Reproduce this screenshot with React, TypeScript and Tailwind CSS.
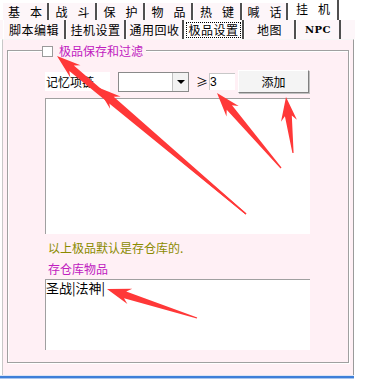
const topTabs = [
  { text: ["基", "本"], w: 47 },
  { text: ["战", "斗"], w: 48 },
  { text: ["保", "护"], w: 48 },
  { text: ["物", "品"], w: 48 },
  { text: ["热", "键"], w: 49 },
  { text: ["喊", "话"], w: 46 },
  { text: ["挂", "机"], w: 51, active: true },
];

const subTabs = [
  { text: "脚本编辑", w: 63 },
  { text: "挂机设置", w: 60 },
  { text: "通用回收", w: 58 },
  { text: "极品设置", w: 60, active: true },
  { text: "地图", w: 52 },
  { text: "NPC", w: 45 },
];

// red annotation arrows, tip -> tail
const arrows = [
  { tip: [57, 56], tail: [246, 214] },
  { tip: [97, 87], tail: [246, 214] },
  { tip: [217, 93], tail: [281, 168] },
  { tip: [286, 97], tail: [293, 153] },
  { tip: [107, 289], tail: [197, 318] },
];

const arrowPoints = (tip: number[], tail: number[]) => {
  const dx = tail[0] - tip[0];
  const dy = tail[1] - tip[1];
  const len = Math.hypot(dx, dy);
  const ux = dx / len;
  const uy = dy / len;
  const nx = -uy;
  const ny = ux;
  const L = 24;
  const W = 8;
  const p = (a: number, b: number) => `${(tip[0] + ux * a + nx * b).toFixed(1)},${(tip[1] + uy * a + ny * b).toFixed(1)}`;
  const t = (b: number) => `${(tail[0] + nx * b).toFixed(1)},${(tail[1] + ny * b).toFixed(1)}`;
  return [p(0, 0), p(L, W), p(L - 5, 3.5), t(0.6), t(-0.6), p(L - 5, -3.5), p(L, -W)].join(" ");
};

const App = () => {
  return (
    <div className="relative w-[370px] h-[384px] bg-white overflow-hidden font-['Noto_Sans_CJK_SC','DejaVu_Sans',sans-serif] text-black">
      <div className="w-[355px]">
        {/* top tab row */}
        <div className="flex h-[20px] pl-[2px] items-end">
          {topTabs.map((tab, i) => (
            <div
              key={i}
              style={{ width: tab.w }}
              className={`flex items-center justify-center gap-[10px] border-l border-l-white border-r-2 border-r-[#505050] text-[12px] leading-none ${
                tab.active ? "h-[20px] bg-white pb-[3px]" : "h-[17px] bg-[#fdf6f9] pt-[1px]"
              }`}
            >
              <span>{tab.text[0]}</span>
              <span>{tab.text[1]}</span>
            </div>
          ))}
        </div>

        {/* second tab row */}
        <div className="flex h-[19px] pl-[3px] bg-[#fdf6f9]">
          {subTabs.map((tab, i) => (
            <div
              key={i}
              style={{ width: tab.w }}
              className={`flex items-center justify-center border-l border-l-white border-r-2 border-r-[#505050] text-[12px] leading-none tracking-[0.5px] ${
                tab.active ? "bg-white" : ""
              }`}
            >
              <span
                className={`px-[1px] py-[1px] ${tab.active ? "border border-dotted border-black" : ""} ${
                  tab.text === "NPC" ? "font-['DejaVu_Serif',serif] text-[10px] font-bold" : ""
                }`}
              >
                {tab.text}
              </span>
            </div>
          ))}
        </div>

        {/* panel */}
        <div className="ml-[2px] w-[352px] h-[336px] bg-[#fff0f5] border-l border-l-[#c8c8c8] border-r border-r-[#9a9a9a] border-t border-t-[#f6f6f6] pt-[10px] pl-[4px]">
          <div className="w-[342px] h-[313px] border border-[#a0a0a0] shadow-[inset_1px_1px_0_#ffffff,1px_1px_0_#ffffff]">
            {/* legend */}
            <div className="-mt-[7px] ml-[34px] flex items-center h-[14px] w-fit bg-[#fff0f5] pr-[3px]">
              <div className="w-[11px] h-[11px] bg-white border border-[#9a9a9a]" />
              <span className="ml-[6px] text-[12px] leading-[14px] text-[#c020c0]">极品保存和过滤</span>
            </div>

            {/* controls row */}
            <div className="mt-[12px] ml-[37px] flex items-center h-[23px]">
              <div className="w-[65px] h-[19px] bg-white text-[12px] leading-[19px] pl-[1px]">记忆项链</div>
              <div className="ml-[8px] w-[71px] h-[20px] bg-white border border-[#8a8a8a] flex justify-end">
                <div className="w-[16px] h-full bg-[#f2f2f2] border-l border-[#c0c0c0] flex items-center justify-center">
                  <div className="w-0 h-0 border-l-[4px] border-r-[4px] border-t-[4px] border-l-transparent border-r-transparent border-t-black" />
                </div>
              </div>
              <span className="ml-[7px] w-[10px] text-[12px] leading-none">≥</span>
              <div className="ml-[3px] w-[26px] h-[17px] bg-white border-t border-l border-[#c8c8c8] text-[12px] leading-[16px] font-['Liberation_Sans',sans-serif]">
                3
              </div>
              <div className="ml-[3px] w-[71px] h-[23px] bg-[#f4f4f4] border border-t-white border-l-white border-r-[#808080] border-b-[#808080] shadow-[1px_1px_0_#c0c0c0] flex items-center justify-center text-[12px] leading-none">
                添加
              </div>
            </div>

            {/* upper list */}
            <div className="mt-[5px] ml-[37px] w-[265px] h-[136px] bg-white border-t border-l border-[#a0a0a0]" />

            <div className="mt-[7px] ml-[40px] h-[14px] text-[12px] leading-[14px] text-[#8b8b00]">以上极品默认是存仓库的.</div>
            <div className="mt-[7px] ml-[40px] h-[14px] text-[12px] leading-[14px] text-[#c020c0]">存仓库物品</div>

            {/* lower list */}
            <div className="mt-[3px] ml-[37px] w-[265px] h-[71px] bg-white border-t border-l border-[#a0a0a0] text-[13px] leading-[15px]">
              圣战|法神|
            </div>
          </div>
        </div>
        <div className="w-[354px] h-[1px] bg-[#dde6f5]" />
        <div className="w-[354px] h-[2px] bg-[#3f7fd8]" />
        <div className="w-[354px] h-[1px] bg-[#a9c6ef]" />
      </div>

      {/* annotation arrows */}
      <svg className="absolute inset-0 pointer-events-none" width="370" height="384">
        {arrows.map((a, i) => (
          <polygon key={i} points={arrowPoints(a.tip, a.tail)} fill="#ff3838" />
        ))}
      </svg>
    </div>
  );
};

export default App;
